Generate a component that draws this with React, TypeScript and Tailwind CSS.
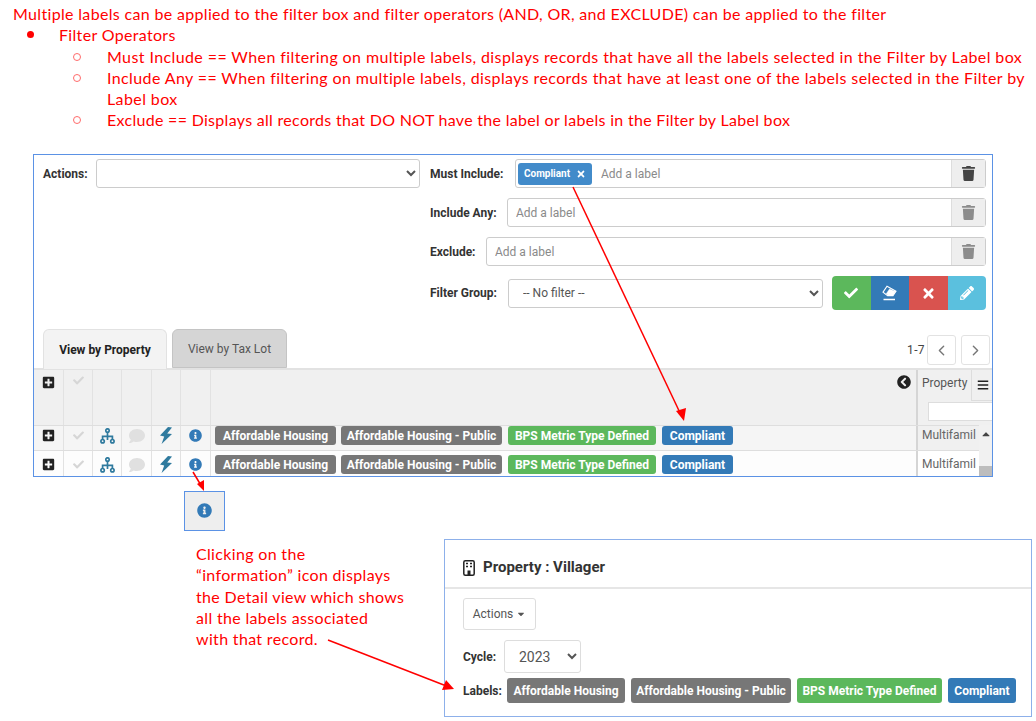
import React from "react";
import { FaPlusSquare, FaCheck, FaComment, FaInfoCircle, FaChevronCircleLeft, FaBars, FaTrash, FaTimes, FaPencilAlt, FaCaretDown, FaCaretUp } from "react-icons/fa";
import { LuChevronLeft, LuChevronRight } from "react-icons/lu";

const Tree = () => (
  <svg width="15" height="16" viewBox="0 0 15 16" fill="none" stroke="#2f7a9e" strokeWidth="1.7">
    <circle cx="7.5" cy="2.5" r="1.7" />
    <circle cx="2.6" cy="13.2" r="1.7" />
    <circle cx="12.4" cy="13.2" r="1.7" />
    <path d="M7.5 4.2V12M2.6 11.5V8.4H12.4V11.5" />
  </svg>
);

const Bolt = () => (
  <svg width="14" height="17" viewBox="0 0 14 17" fill="#2f7a9e">
    <path d="M9 0L1 8.6L5.2 9.4L2.6 17L13 6.9L8.2 6.4L13 0.4Z" />
  </svg>
);

const Eraser = () => (
  <svg width="15" height="16" viewBox="0 0 15 16" fill="none" stroke="#fff">
    <path d="M5 1.2L14 6.2L11 10.6H5.6L1 7.2Z" strokeWidth="1.1" />
    <path d="M7.5 4L13.6 6.6L10.8 10.4H6.2L4.2 8.8Z" fill="#fff" strokeWidth="0.4" />
    <path d="M1.5 14.5H13" strokeWidth="1.3" />
  </svg>
);

const Building = () => (
  <svg width="12" height="16" viewBox="0 0 12 16" fill="none" stroke="#222">
    <rect x="0.8" y="0.8" width="10.4" height="14.4" rx="1.5" strokeWidth="1.5" />
    <path d="M3 3.5H5M7 3.5H9M3 6.5H5M7 6.5H9" strokeWidth="1.6" />
    <path d="M6 10.5V15" strokeWidth="3" />
  </svg>
);

const Chip = ({ c, w, h = "h-[19px]", children }: { c: string; w: string; h?: string; children: React.ReactNode }) => (
  <span className={`${c} ${w} ${h} flex shrink-0 items-center justify-center rounded-[3px] text-[12px] font-bold whitespace-nowrap text-white`}>{children}</span>
);

const Trash = ({ dark }: { dark?: boolean }) => (
  <span className="flex w-[34px] shrink-0 items-center justify-center border-l border-[#ddd] bg-[#eeeeee]">
    <FaTrash className={dark ? "text-[15px] text-[#444]" : "text-[15px] text-[#8c8c8c]"} />
  </span>
);

const FilterRow = ({ label, w, dark, children }: { label: string; w: string; dark?: boolean; children?: React.ReactNode }) => (
  <div className="flex h-[29px] items-center">
    <span className={`${w} shrink-0 text-[12px] font-bold text-[#333]`}>{label}</span>
    <div className="flex h-full flex-1 rounded-[3px] border border-[#ccc] bg-white">
      <div className="flex flex-1 items-center">
        {children}
        <input placeholder="Add a label" className="min-w-0 flex-1 bg-transparent pl-[8px] text-[12px] outline-none placeholder:text-[#8a8a8a]" />
      </div>
      <Trash dark={dark} />
    </div>
  </div>
);

const Cell = ({ w, top, children }: { w: string; top: string; children?: React.ReactNode }) => (
  <span className={`${w} ${top} flex justify-center border-r border-[#e2e2e2]`}>
    <span className="flex h-[19px] items-center">{children}</span>
  </span>
);

const Row = ({ bg, h, top, propBg }: { bg: string; h: string; top: string; propBg: string }) => (
  <div className={`flex border-t border-[#dedede] ${h} ${bg}`}>
    <Cell w="w-[30px]" top={top}><FaPlusSquare className="text-[13px] text-[#222]" /></Cell>
    <Cell w="w-[29px]" top={top}><FaCheck className="text-[11px] text-[#d6d6d6]" /></Cell>
    <Cell w="w-[29px]" top={top}><Tree /></Cell>
    <Cell w="w-[30px]" top={top}><FaComment className="text-[16px] text-[#e0e0e0]" /></Cell>
    <Cell w="w-[29px]" top={top}><Bolt /></Cell>
    <Cell w="w-[30px]" top={top}><FaInfoCircle className="text-[13px] text-[#337ab7]" /></Cell>
    <div className={`flex w-[707px] items-start gap-[5px] border-r-2 border-[#d5d5d5] pl-[4px] ${top}`}>
      <Chip c="bg-[#777777]" w="w-[121px]">Affordable Housing</Chip>
      <Chip c="bg-[#777777]" w="w-[161px]">Affordable Housing - Public</Chip>
      <Chip c="bg-[#5cb85c] ml-[1px]" w="w-[148px]">BPS Metric Type Defined</Chip>
      <Chip c="bg-[#337ab7] ml-[1px]" w="w-[71px]">Compliant</Chip>
    </div>
    <span className={`${top} ${propBg} flex-1 pl-[4px] text-[12px] leading-[18px] whitespace-nowrap text-[#666]`}>Multifamil</span>
  </div>
);

export default function App() {
  const redText = "[font-family:Lato,sans-serif] text-[16px] leading-[21.3px] text-[#ff0000] tracking-[0.33px]";
  return (
    <div className="relative h-[721px] w-[1036px] overflow-hidden bg-white [font-family:Roboto,sans-serif]">
      <div className={`${redText} h-[154px] pl-[13px] pt-[3px]`}>
        <p>Multiple labels can be applied to the filter box and filter operators (AND, OR, and EXCLUDE) can be applied to the filter</p>
        <div className="flex pl-[14px]">
          <span className="w-[32px]"><span className="mt-[7px] block h-[7px] w-[7px] rounded-full bg-[#ff0000]" /></span>
          <span>Filter Operators</span>
        </div>
        <div className="flex pl-[60px]">
          <span className="w-[34px] shrink-0"><span className="mt-[7px] block h-[8px] w-[8px] rounded-full border border-[#ff6b6b]" /></span>
          <span className="tracking-[0.4px] whitespace-nowrap">Must Include == When filtering on multiple labels, displays records that have all the labels selected in the Filter by Label box</span>
        </div>
        <div className="flex pl-[60px]">
          <span className="w-[34px] shrink-0"><span className="mt-[7px] block h-[8px] w-[8px] rounded-full border border-[#ff6b6b]" /></span>
          <span className="tracking-[0.39px] whitespace-nowrap">Include Any == When filtering on multiple labels, displays records that have at least one of the labels selected in the Filter by<br />Label box</span>
        </div>
        <div className="flex pl-[60px]">
          <span className="w-[34px] shrink-0"><span className="mt-[7px] block h-[8px] w-[8px] rounded-full border border-[#ff6b6b]" /></span>
          <span className="tracking-[0.3px] whitespace-nowrap">Exclude == Displays all records that DO NOT have the label or labels in the Filter by Label box</span>
        </div>
      </div>

      <div className="ml-[33px] h-[323px] w-[960px] overflow-hidden border border-[#5b92e5]">
        <div className="flex pt-[4px]">
          <div className="flex h-[29px] w-[396px] items-center pl-[9px]">
            <span className="w-[53px] shrink-0 text-[12px] font-bold text-[#333]">Actions:</span>
            <select className="h-full w-[324px] rounded-[3px] border border-[#ccc] bg-white text-[12px] text-[#555]"><option></option></select>
          </div>
          <div className="flex w-[556px] flex-col gap-[10px]">
            <FilterRow label="Must Include:" w="w-[85px]" dark>
              <span className="ml-[2px] mr-[1px] flex h-[22px] w-[74px] items-center justify-center gap-[6px] rounded-[3px] bg-[#428bca] text-[10px] font-bold text-white">
                Compliant <FaTimes className="text-[10px]" />
              </span>
            </FilterRow>
            <FilterRow label="Include Any:" w="w-[77px]" />
            <FilterRow label="Exclude:" w="w-[56px]" />
            <div className="flex h-[34px] items-center">
              <span className="w-[78px] shrink-0 text-[12px] font-bold text-[#333]">Filter Group:</span>
              <select className="h-[29px] w-[315px] rounded-[3px] border border-[#ccc] bg-white pl-[10px] text-[12px] text-[#555]"><option>-- No filter --</option></select>
              <div className="ml-[9px] flex h-full flex-1 overflow-hidden rounded-[4px] text-white">
                <span className="flex flex-1 items-center justify-center bg-[#5cb85c]"><FaCheck className="text-[14px]" /></span>
                <span className="flex flex-1 items-center justify-center bg-[#337ab7]"><Eraser /></span>
                <span className="flex flex-1 items-center justify-center bg-[#d9534f]"><FaTimes className="text-[15px]" /></span>
                <span className="flex flex-1 items-center justify-center bg-[#5bc0de]"><FaPencilAlt className="text-[14px]" /></span>
              </div>
            </div>
          </div>
        </div>

        <div className="mt-[19px] flex h-[39px] items-start pl-[9px]">
          <span className="relative z-10 flex h-[40px] w-[124px] items-center justify-center rounded-t-[6px] border border-b-0 border-[#e2e2e2] bg-[#f3f3f3] text-[12px] font-bold text-[#222]">View by Property</span>
          <span className="ml-[5px] flex h-[39px] w-[115px] items-center justify-center rounded-t-[6px] border border-[#c4c4c4] bg-[#d5d5d5] text-[12px] text-[#555]">View by Tax Lot</span>
          <div className="ml-auto mt-[6px] flex items-center pr-[2px]">
            <span className="mr-[2px] text-[12px] tracking-[0.4px] text-[#444]">1-7</span>
            <span className="flex h-[30px] w-[29px] items-center justify-center rounded-[3px] border border-[#e2e2e2] text-[#777]"><LuChevronLeft size={17} /></span>
            <span className="ml-[5px] flex h-[30px] w-[29px] items-center justify-center rounded-[3px] border border-[#e2e2e2] text-[#777]"><LuChevronRight size={17} /></span>
          </div>
        </div>

        <div className="flex h-[57px] border-t-2 border-[#e2e2e2] bg-[#f0f0f0]">
          <Cell w="w-[30px]" top="pt-[3px]"><FaPlusSquare className="text-[13px] text-[#222]" /></Cell>
          <Cell w="w-[29px]" top="pt-[1px]"><FaCheck className="text-[11px] text-[#d6d6d6]" /></Cell>
          <Cell w="w-[29px]" top="" />
          <Cell w="w-[30px]" top="" />
          <Cell w="w-[29px]" top="" />
          <Cell w="w-[30px]" top="" />
          <div className="flex w-[707px] justify-end border-r-2 border-[#d5d5d5] pr-[5px] pt-[5px]"><FaChevronCircleLeft className="text-[14px] text-[#222]" /></div>
          <div className="flex-1 overflow-hidden">
            <div className="flex h-[31px]">
              <span className="flex w-[53px] items-center pb-[5px] pl-[4px] text-[12px] text-[#555]">Property</span>
              <span className="flex flex-1 items-center border-b border-l border-[#ddd] pl-[5px] text-[#222]"><FaBars className="text-[12px]" /></span>
            </div>
            <div className="ml-[10px] mt-[1px] h-[19px] w-[70px] border border-[#ddd] bg-white" />
          </div>
        </div>
        <div className="relative">
          <Row bg="bg-[#f5f5f5]" h="h-[25px]" top="pt-0" propBg="bg-[#f0f0f0]" />
          <Row bg="bg-[#fdfdfd]" h="h-[26px]" top="pt-[4px]" propBg="bg-white" />
          <div className="absolute right-0 top-0 flex h-[51px] w-[13px] flex-col items-center bg-[#f1f1f1]">
            <FaCaretUp className="mt-[3px] text-[12px] text-[#444]" />
            <span className="mt-auto h-[10px] w-full bg-[#bdbdbd]" />
          </div>
        </div>
      </div>

      <div className="ml-[184px] mt-[14px] flex h-[40px] w-[41px] items-center justify-center border border-[#5b92e5] bg-[#eeeeee] pb-[1px] pr-[1px]">
        <FaInfoCircle className="text-[15px] text-[#337ab7]" />
      </div>

      <div className="mt-[8px] flex">
        <div className={`${redText} w-[444px] pl-[196px] pt-[4px]`}>
          <p>Clicking on the</p>
          <p>“information” icon displays</p>
          <p>the Detail view which shows</p>
          <p>all the labels associated</p>
          <p>with that record.</p>
        </div>
        <div className="h-[178px] w-[588px] border border-[#8db0ea]">
          <div className="flex h-[49px] items-center gap-[8px] border-b-2 border-[#e6e6e6] pl-[18px] pt-[8px]">
            <Building />
            <span className="text-[15px] font-bold text-[#333]">Property : Villager</span>
          </div>
          <div className="pl-[18px]">
            <button className="mt-[9px] flex h-[32px] w-[73px] items-center justify-center gap-[3px] rounded-[3px] border border-[#ddd] text-[12px] text-[#555]">Actions <FaCaretDown className="text-[10px]" /></button>
            <div className="mt-[10px] flex h-[33px] items-center">
              <span className="w-[41px] text-[12px] font-bold text-[#333]">Cycle:</span>
              <select className="h-full w-[77px] rounded-[3px] border border-[#ddd] bg-white pl-[10px] text-[14px] text-[#555]"><option>2023</option></select>
            </div>
            <div className="mt-[5px] flex h-[25px] items-center gap-[6px]">
              <span className="w-[38px] text-[12px] font-bold text-[#333]">Labels:</span>
              <Chip c="bg-[#777777]" w="w-[118px]" h="h-[25px]">Affordable Housing</Chip>
              <Chip c="bg-[#777777]" w="w-[160px]" h="h-[25px]">Affordable Housing - Public</Chip>
              <Chip c="bg-[#5cb85c]" w="w-[145px]" h="h-[25px]">BPS Metric Type Defined</Chip>
              <Chip c="bg-[#337ab7]" w="w-[68px]" h="h-[25px]">Compliant</Chip>
            </div>
          </div>
        </div>
      </div>

      <svg className="pointer-events-none absolute left-0 top-0" width="1036" height="721" fill="none">
        <path d="M573 187L682 417" stroke="#f00" strokeWidth="1.5" />
        <path d="M684 421L676 411L686 408Z" fill="#f00" />
        <path d="M193 472L202 487" stroke="#f00" strokeWidth="1.5" />
        <path d="M204 491L197 484L204 480Z" fill="#f00" />
        <path d="M328 640L449 687" stroke="#f00" strokeWidth="1.5" />
        <path d="M454 689L442 690L446 680Z" fill="#f00" />
      </svg>
    </div>
  );
}
